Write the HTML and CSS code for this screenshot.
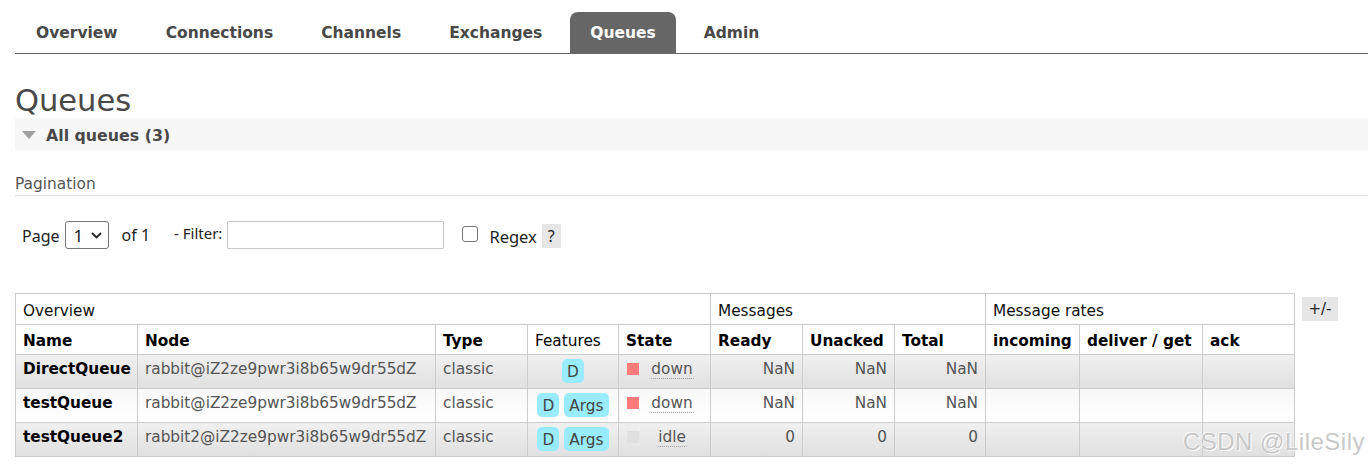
FILE: index.html
```html
<!DOCTYPE html>
<html>
<head>
<meta charset="utf-8">
<link rel="stylesheet" href="styles.css">
</head>
<body>
<div class="page">
  <ul class="tabs">
    <li class="tab">Overview</li>
    <li class="tab">Connections</li>
    <li class="tab">Channels</li>
    <li class="tab">Exchanges</li>
    <li class="tab active">Queues</li>
    <li class="tab">Admin</li>
  </ul>

  <h1 class="title">Queues</h1>
  <div class="section-bar"><span class="triangle"></span><span class="section-title">All queues (3)</span></div>

  <h3 class="pagination-title">Pagination</h3>

  <div class="controls">
    <span class="lbl lbl-page">Page</span>
    <span class="select-wrap">
      <select class="page-select"><option>1</option></select>
      <svg class="chev" width="11" height="7" viewBox="0 0 11 7"><path d="M1 1 L5.5 5.5 L10 1" fill="none" stroke="#222" stroke-width="1.8"/></svg>
    </span>
    <span class="lbl lbl-of">of 1</span>
    <span class="lbl lbl-filter">- Filter:</span>
    <input class="filter-input" type="text">
    <span class="checkbox"></span>
    <span class="lbl lbl-regex">Regex</span>
    <span class="help">?</span>
  </div>

  <div class="table-area">
    <table class="list">
      <colgroup>
        <col style="width:122px"><col style="width:298px"><col style="width:92px"><col style="width:91px"><col style="width:92px">
        <col style="width:92px"><col style="width:92px"><col style="width:91px">
        <col style="width:94px"><col style="width:123px"><col style="width:92px">
      </colgroup>
      <thead>
        <tr class="group">
          <th colspan="5">Overview</th>
          <th colspan="3">Messages</th>
          <th colspan="3">Message rates</th>
        </tr>
        <tr class="heads">
          <th class="b">Name</th>
          <th class="b">Node</th>
          <th class="b">Type</th>
          <th class="plain">Features</th>
          <th class="b">State</th>
          <th class="b">Ready</th>
          <th class="b">Unacked</th>
          <th class="b">Total</th>
          <th class="b">incoming</th>
          <th class="b">deliver / get</th>
          <th class="b">ack</th>
        </tr>
      </thead>
      <tbody>
        <tr class="alt1">
          <td class="name">DirectQueue</td>
          <td>rabbit@iZ2ze9pwr3i8b65w9dr55dZ</td>
          <td>classic</td>
          <td class="c"><span class="badge">D</span></td>
          <td><div class="state"><span class="sq red"></span><span class="st-text"><abbr>down</abbr></span></div></td>
          <td class="r">NaN</td>
          <td class="r">NaN</td>
          <td class="r">NaN</td>
          <td></td><td></td><td></td>
        </tr>
        <tr class="alt2">
          <td class="name">testQueue</td>
          <td>rabbit@iZ2ze9pwr3i8b65w9dr55dZ</td>
          <td>classic</td>
          <td class="c"><span class="badge">D</span> <span class="badge">Args</span></td>
          <td><div class="state"><span class="sq red"></span><span class="st-text"><abbr>down</abbr></span></div></td>
          <td class="r">NaN</td>
          <td class="r">NaN</td>
          <td class="r">NaN</td>
          <td></td><td></td><td></td>
        </tr>
        <tr class="alt1">
          <td class="name">testQueue2</td>
          <td>rabbit2@iZ2ze9pwr3i8b65w9dr55dZ</td>
          <td>classic</td>
          <td class="c"><span class="badge">D</span> <span class="badge">Args</span></td>
          <td><div class="state"><span class="sq grey"></span><span class="st-text"><abbr>idle</abbr></span></div></td>
          <td class="r">0</td>
          <td class="r">0</td>
          <td class="r">0</td>
          <td></td><td></td><td></td>
        </tr>
      </tbody>
    </table>
    <span class="toggle">+/-</span>
  </div>
</div>
<div class="watermark">CSDN @LileSily</div>
</body>
</html>
```

FILE: styles.css
```css
html, body {
  margin: 0;
  padding: 0;
  background: #fff;
}
body {
  font-family: "DejaVu Sans", Verdana, sans-serif;
  font-size: 15px;
  color: #484848;
  position: relative;
  height: 467px;
  overflow: hidden;
}
.page {
  padding-left: 15px;
}
.tabs {
  list-style: none;
  margin: 12px 0 0;
  padding: 0 0 0 1px;
  display: flex;
  gap: 8px;
  border-bottom: 1px solid #666;
}
.tab {
  height: 39px;
  line-height: 39px;
  padding: 2px 20px 0;
  font-size: 15.5px;
  font-weight: bold;
  color: #484848;
  border-radius: 8px 8px 0 0;
}
.tab.active {
  background: #666;
  color: #fff;
}
.title {
  margin: 29px 0 0;
  font-size: 30.5px;
  line-height: 35px;
  font-weight: normal;
  color: #484848;
}
.section-bar {
  height: 32px;
  background: #f7f7f7;
  display: flex;
  align-items: center;
}
.triangle {
  width: 0;
  height: 0;
  margin-left: 7px;
  margin-right: 10px;
  margin-top: 1px;
  border-left: 7px solid transparent;
  border-right: 7px solid transparent;
  border-top: 8px solid #a0a0a0;
}
.section-title {
  font-weight: bold;
  font-size: 15.8px;
  padding-top: 3px;
  color: #484848;
}
.pagination-title {
  margin: 24px 0 0;
  padding-bottom: 1px;
  font-size: 15.4px;
  line-height: 20px;
  font-weight: normal;
  color: #555;
  border-bottom: 1px solid #ddd;
}
.controls {
  margin-top: 25px;
  height: 28px;
  display: flex;
  align-items: center;
  padding-left: 7px;
  font-family: "Noto Sans", "Open Sans", sans-serif;
  font-size: 16px;
  color: #222;
}
.lbl-page { margin-right: 5px; margin-top: 2px; }
.select-wrap {
  position: relative;
  display: inline-block;
  width: 44px;
  height: 28px;
}
.page-select {
  appearance: none;
  -webkit-appearance: none;
  width: 44px;
  height: 28px;
  box-sizing: border-box;
  border: 1px solid #767676;
  border-radius: 3px;
  background: #fff;
  font-family: "Noto Sans", sans-serif;
  font-size: 17px;
  color: #222;
  padding: 0 0 0 8px;
  margin: 0;
}
.chev {
  position: absolute;
  left: 26px;
  top: 11px;
  pointer-events: none;
}
.lbl-of { margin-left: 13px; }
.lbl-filter { margin-left: 24px; margin-top: -4px; font-size: 15px; }
.filter-input {
  margin: 0 0 0 5px;
  width: 217px;
  height: 28px;
  box-sizing: border-box;
  border: 1px solid #c8c8c8;
  border-radius: 1px;
  padding: 0 4px;
}
.checkbox {
  display: inline-block;
  width: 16px;
  height: 16px;
  box-sizing: border-box;
  border: 1px solid #767676;
  border-radius: 3px;
  margin-left: 18px;
  margin-top: -2px;
}
.lbl-regex { margin-left: 11px; font-size: 16.5px; margin-top: 3px; }
.help {
  display: inline-block;
  margin-left: 5px;
  width: 19px;
  height: 24px;
  line-height: 24px;
  text-align: center;
  background: #e6e6e6;
  font-size: 16px;
  margin-top: 2px;
}
.table-area {
  margin-top: 44px;
  display: flex;
  align-items: flex-start;
  gap: 7px;
}
.list {
  border-collapse: collapse;
  table-layout: fixed;
  width: 1280px;
  font-size: 15.3px;
}
.list th, .list td {
  border: 1px solid #ccc;
  text-align: left;
  vertical-align: top;
  line-height: 20px;
  white-space: nowrap;
  overflow: hidden;
}
.list tr.group th {
  padding: 7px 7px 3px;
  font-weight: normal;
  color: #111;
  background: #fff;
}
.list tr.heads th {
  padding: 6px 7px 3px;
  color: #000;
  background: #fff;
}
.list th.b { font-weight: bold; }
.list th.plain { font-weight: normal; }
.list td {
  padding: 4px 7px 5px;
  color: #555;
}
.list td.name {
  font-weight: bold;
  color: #000;
}
.list td.r { text-align: right; }
.list td.c { text-align: center; }
.list tr.alt1 {
  background: linear-gradient(#f0f0f0, #e0e0e0);
}
.list tr.alt2 {
  background: linear-gradient(#f8f8f8, #ffffff);
}
.badge {
  display: inline-block;
  vertical-align: top;
  height: 24px;
  line-height: 27px;
  padding: 0 5px;
  min-width: 12px;
  border-radius: 5px;
  background: #99ebff;
  color: #444;
}
.state {
  display: flex;
  align-items: flex-start;
}
.sq {
  width: 12px;
  height: 12px;
  margin-top: 4px;
  margin-left: 1px;
  flex: none;
}
.sq.red { background: #ff7a7a; }
.sq.grey { background: #e0e0e0; }
.st-text {
  flex: 1;
  text-align: center;
  padding-left: 2px;
}
.st-text abbr {
  text-decoration: none;
  border-bottom: 1px dotted #999;
  border-radius: 3px;
  padding: 0 2px;
}
.toggle {
  margin-top: 4px;
  display: inline-block;
  width: 36px;
  height: 24px;
  line-height: 24px;
  text-align: center;
  background: #e6e6e6;
  color: #222;
  font-size: 15px;
}
.watermark {
  position: absolute;
  right: 3px;
  top: 427px;
  font-family: "Liberation Sans", Arial, sans-serif;
  font-size: 24px;
  line-height: 30px;
  color: rgba(190, 190, 190, 0.85);
  text-shadow: 1px 1px 0 #fff, -1px -1px 0 rgba(255,255,255,0.6);
  letter-spacing: 0.5px;
}
```
